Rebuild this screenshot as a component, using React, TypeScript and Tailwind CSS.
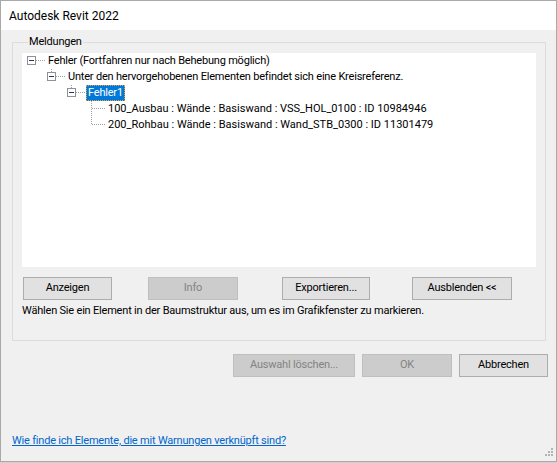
import React from 'react';

const font = { fontFamily: 'Roboto, "Liberation Sans", Arial, sans-serif' };

// Kleines Plus/Minus-Kästchen mit gepunkteten Verbindungslinien
const NodeCell: React.FC<{ expander?: boolean; lineAbove?: boolean; last?: boolean }> = ({
  expander,
  lineAbove,
  last,
}) => (
  <svg width="24" height="16" viewBox="0 0 24 16" shapeRendering="crispEdges" className="shrink-0">
    {expander ? (
      <>
        {lineAbove && <line x1="9.5" y1="0" x2="9.5" y2="3" stroke="#a0a0a0" strokeDasharray="1 1" />}
        <line x1="14" y1="7.5" x2="24" y2="7.5" stroke="#a0a0a0" strokeDasharray="1 1" />
        <rect x="5.5" y="3.5" width="8" height="8" fill="#fff" stroke="#919191" />
        <line x1="7" y1="7.5" x2="12" y2="7.5" stroke="#1f3a68" />
      </>
    ) : (
      <>
        <line x1="9.5" y1="0" x2="9.5" y2={last ? 8 : 16} stroke="#a0a0a0" strokeDasharray="1 1" />
        <line x1="10" y1="7.5" x2="24" y2="7.5" stroke="#a0a0a0" strokeDasharray="1 1" />
      </>
    )}
  </svg>
);

const TreeRow: React.FC<{ level: number; children: React.ReactNode }> = ({ level, children }) => (
  <div className="flex h-4 items-center whitespace-nowrap" style={{ paddingLeft: level * 20 }}>
    {children}
  </div>
);

const Btn: React.FC<{ label: string; disabled?: boolean; className?: string }> = ({
  label,
  disabled,
  className = '',
}) => (
  <div
    className={
      'flex h-[23px] items-center justify-center border ' +
      (disabled
        ? 'border-[#bfbfbf] bg-[#cccccc] text-[#838383] '
        : 'border-[#adadad] bg-[#e1e1e1] text-black ') +
      className
    }
  >
    {label}
  </div>
);

export default function App() {
  return (
    <div className="h-[463px] w-[557px] bg-[#cfcfcf] text-[11px] tracking-[-0.2px] text-black" style={font}>
      <div className="flex h-[462px] w-[557px] flex-col border border-[#a9a9a9] bg-[#f0f0f0]">
        {/* Titelleiste */}
        <div className="flex h-[29px] shrink-0 items-center bg-white pl-2 text-[12px] tracking-normal">
          Autodesk Revit 2022
        </div>

        {/* Gruppe Meldungen */}
        <fieldset className="ml-[11px] mt-[4px] h-[307px] w-[534px] border border-[#dcdcdc] pl-[9px] pr-[9px]">
          <legend className="ml-[6px] px-[1px] leading-[16px]">Meldungen</legend>
          <div className="mt-[3px] h-[214px] bg-white pt-0">
            <TreeRow level={0}>
              <NodeCell expander />
              <span className="px-[2px]">Fehler (Fortfahren nur nach Behebung möglich)</span>
            </TreeRow>
            <TreeRow level={1}>
              <NodeCell expander lineAbove />
              <span className="px-[2px]">Unter den hervorgehobenen Elementen befindet sich eine Kreisreferenz.</span>
            </TreeRow>
            <TreeRow level={2}>
              <NodeCell expander lineAbove />
              <span className="flex h-4 items-center bg-[#0078d7] px-[2px] text-white outline outline-1 outline-dotted outline-offset-[-1px] outline-[#e8a33c]">
                Fehler1
              </span>
            </TreeRow>
            <TreeRow level={3}>
              <NodeCell />
              <span className="px-[2px] tracking-normal">100_Ausbau : Wände : Basiswand : VSS_HOL_0100 : ID 10984946</span>
            </TreeRow>
            <TreeRow level={3}>
              <NodeCell last />
              <span className="px-[2px] tracking-normal">200_Rohbau : Wände : Basiswand : Wand_STB_0300 : ID 11301479</span>
            </TreeRow>
          </div>

          <div className="mt-[10px] flex">
            <Btn label="Anzeigen" className="ml-[1px] w-[89px]" />
            <Btn label="Info" disabled className="ml-[36px] w-[90px]" />
            <Btn label="Exportieren..." className="ml-[44px] w-[88px]" />
            <Btn label="Ausblenden <<" className="ml-[42px] w-[100px]" />
          </div>
          <div className="mt-[3px] leading-[16px]">
            Wählen Sie ein Element in der Baumstruktur aus, um es im Grafikfenster zu markieren.
          </div>
        </fieldset>

        {/* Dialogschaltflächen */}
        <div className="mt-[13px] flex gap-[7px] pl-[232px]">
          <Btn label="Auswahl löschen..." disabled className="w-[122px]" />
          <Btn label="OK" disabled className="w-[90px]" />
          <Btn label="Abbrechen" className="w-[89px]" />
        </div>

        <div className="relative mt-auto flex h-[40px] items-center pl-[11px]">
          <span className="text-[#0066cc] underline">Wie finde ich Elemente, die mit Warnungen verknüpft sind? </span>
          <svg width="12" height="12" className="absolute bottom-[2px] right-[2px]" shapeRendering="crispEdges">
            <rect x="9" y="1" width="2" height="2" fill="#b4b4b4" />
            <rect x="6" y="4" width="2" height="2" fill="#b4b4b4" />
            <rect x="9" y="4" width="2" height="2" fill="#b4b4b4" />
            <rect x="3" y="7" width="2" height="2" fill="#b4b4b4" />
            <rect x="6" y="7" width="2" height="2" fill="#b4b4b4" />
            <rect x="9" y="7" width="2" height="2" fill="#b4b4b4" />
          </svg>
        </div>
      </div>
    </div>
  );
}
